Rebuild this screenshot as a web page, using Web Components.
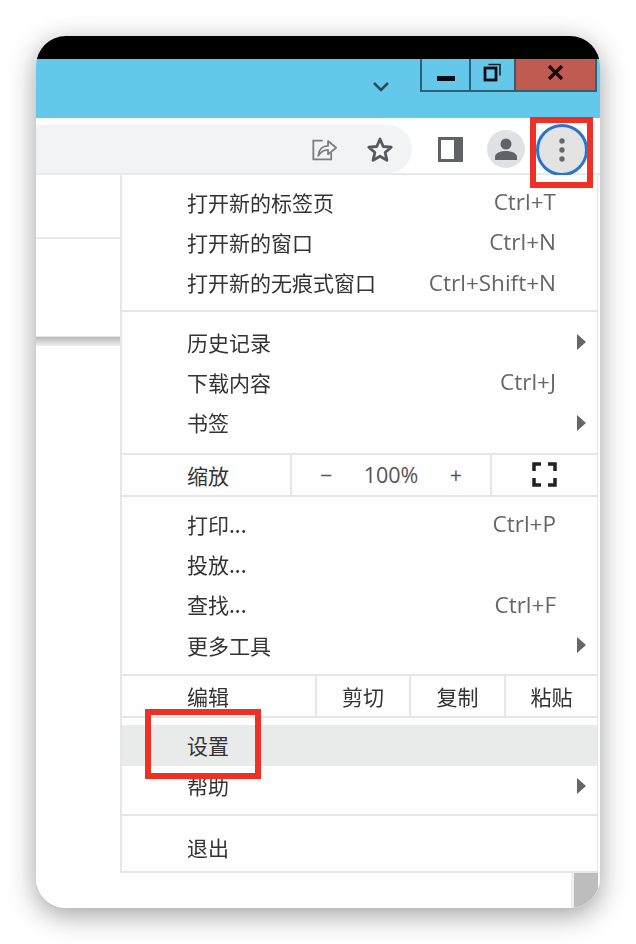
<!DOCTYPE html>
<html lang="zh-CN">

<head>
  <meta charset="UTF-8">
  <title>Chrome menu</title>
  <style>
    html, body {
      margin: 0;
      background: #fff;
    }

    body {
      padding: 36px 36px 36px;
      font-family: "Open Sans", "Noto Sans CJK SC", sans-serif;
    }
  </style>
</head>

<body>
  <template id="browser-window">
    <style>
      :host {
        display: flex;
        flex-direction: column;
        position: relative;
        width: 564px;
        height: 872px;
        border-radius: 30px;
        overflow: hidden;
        background: #fefefe;
        box-shadow: 0 7px 28px rgba(0, 0, 0, .38);
        filter: blur(.4px);
      }

      .top {
        height: 23px;
        background: #000;
        flex: none;
      }
    </style>
    <div class="top"></div>
    <slot></slot>
  </template>

  <template id="title-bar">
    <style>
      :host {
        display: flex;
        justify-content: flex-end;
        align-items: flex-start;
        height: 59px;
        flex: none;
        background: #63c8e9;
        padding-right: 3px;
        box-sizing: border-box;
      }

      .chev {
        margin: 22px 30px 0 0;
      }

      .ctl {
        display: flex;
        height: 33px;
        box-sizing: border-box;
        border: solid #2f6175;
        border-width: 0 2px 2px 2px;
      }

      .ctl div {
        display: flex;
        align-items: center;
        justify-content: center;
        padding-bottom: 4px;
        box-sizing: border-box;
      }

      .ctl .min {
        width: 49px;
        border-right: 2px solid #2f6175;
        padding: 6px 0 0;
      }

      .max {
        width: 45px;
        border-right: 2px solid #2f6175;
      }

      .close {
        width: 79px;
        background: #bf5b50;
      }
    </style>
    <svg class="chev" width="18" height="12" viewBox="0 0 18 12">
      <path d="M2 2l7 7 7-7" fill="none" stroke="#2d4a5a" stroke-width="2.6" />
    </svg>
    <div class="ctl">
      <div class="min"><svg width="18" height="6" viewBox="0 0 18 6"><rect width="18" height="5" y="1" fill="#0a0a12" /></svg></div>
      <div class="max"><svg width="19" height="19" viewBox="0 0 19 19">
          <path d="M5.500 1.500h11.500v11" fill="none" stroke="#16242c" stroke-width="1.600" />
          <rect x="2" y="5" width="11" height="12" fill="none" stroke="#0a0a12" stroke-width="2.800" />
        </svg></div>
      <div class="close"><svg width="17" height="15" viewBox="0 0 17 15">
          <path d="M2 1l13 13M15 1L2 14" stroke="#160c0c" stroke-width="3.400" fill="none" />
        </svg></div>
    </div>
  </template>

  <template id="tool-bar">
    <style>
      :host {
        display: flex;
        align-items: flex-start;
        height: 57px;
        flex: none;
        box-sizing: border-box;
        padding-top: 7px;
        background: #fff;
        border-bottom: 2px solid #e8e9ea;
      }

      .omni {
        width: 376px;
        height: 48px;
        background: #f1f3f4;
        border-radius: 0 24px 24px 0;
        display: flex;
        align-items: center;
        justify-content: flex-end;
        gap: 28px;
        padding-right: 18px;
        box-sizing: border-box;
      }

      .side {
        margin: 12px 0 0 26px;
      }

      .avatar {
        width: 38px;
        height: 38px;
        border-radius: 50%;
        background: #dfe1e5;
        margin: 5px 0 0 24px;
        display: flex;
        align-items: center;
        justify-content: center;
      }

      .dots {
        width: 46px;
        height: 46px;
        border-radius: 50%;
        background: #e3e3e3;
        border: 3px solid #2b74c9;
        margin: -1px 0 0 11px;
        flex: none;
        display: flex;
        align-items: center;
        justify-content: center;
      }
    </style>
    <div class="omni">
      <svg width="27" height="25" viewBox="0 0 30 28" fill="none">
        <path d="M13 4H2.500v21h20v-7" stroke="#7a7e82" stroke-width="2" />
        <path d="M8 21c.500-7 5-11 11-11V4.500L28 12l-9 7.500v-5c-5 0-8 2-11 6.500z" stroke="#7a7e82" stroke-width="2" stroke-linejoin="round" />
      </svg>
      <svg width="28" height="27" viewBox="0 0 28 27" fill="none">
        <path d="M14 3l3.200 7.500 8 .7-6.100 5.300 1.900 7.900L14 20.200l-7 4.200 1.900-7.900-6.100-5.300 8-.7z" stroke="#55595d" stroke-width="2.800" stroke-linejoin="round" />
      </svg>
    </div>
    <svg class="side" width="25" height="25" viewBox="0 0 25 25">
      <rect width="25" height="25" fill="#5f6368" />
      <rect x="3" y="3" width="13" height="19" fill="#fff" />
    </svg>
    <div class="avatar">
      <svg width="24" height="24" viewBox="0 0 24 24" fill="#5f6368">
        <circle cx="12" cy="7" r="5.500" />
        <path d="M1 23v-3c0-4 6-6 11-6s11 2 11 6v3z" />
      </svg>
    </div>
    <div class="dots">
      <svg width="6" height="26" viewBox="0 0 6 26" fill="#66696c">
        <circle cx="3" cy="4" r="2.700" />
        <circle cx="3" cy="13" r="2.700" />
        <circle cx="3" cy="22" r="2.700" />
      </svg>
    </div>
  </template>

  <template id="page-area">
    <style>
      :host {
        display: block;
        flex: 1;
        position: relative;
        background: #fefefe;
      }

      .left {
        width: 84px;
      }

      .a {
        height: 62px;
        border-bottom: 2px solid #e9e9e9;
      }

      .b {
        height: 97px;
        border-bottom: 1px solid #e4e4e4;
      }

      .c {
        height: 9px;
        background: linear-gradient(#b9b9b9, #efefef);
      }

      .thumb {
        position: absolute;
        right: 2px;
        bottom: 0;
        width: 24px;
        height: 36px;
        background: #bdbdbd;
        border-left: 3px solid #efefef;
      }
    </style>
    <div class="left">
      <div class="a"></div>
      <div class="b"></div>
      <div class="c"></div>
    </div>
    <div class="thumb"></div>
    <slot></slot>
  </template>

  <template id="chrome-menu">
    <style>
      :host {
        display: block;
        position: absolute;
        left: 84px;
        top: 0;
        width: 478px;
        height: 698px;
        box-sizing: border-box;
        background: #fefefe;
        border: 2px solid #e6e6e6;
        border-width: 0 1px 2px 2px;
        color: #333;
        font-family: "Noto Sans CJK SC", "Open Sans", sans-serif;
        font-size: 21px;
      }
    </style>
    <slot></slot>
  </template>

  <template id="menu-section">
    <style>
      :host {
        display: block;
        border-bottom: 2px solid #e6e6e6;
        box-sizing: border-box;
      }

      :host([last]) {
        border-bottom: 0;
      }
    </style>
    <slot></slot>
  </template>

  <template id="menu-item">
    <style>
      :host {
        display: flex;
        align-items: center;
        height: 40.330px;
        padding: 0 41px 0 65px;
        position: relative;
        line-height: 1;
      }

      :host([active]) {
        background: #e9eaea;
      }

      .key {
        margin-left: auto;
        font-family: "Open Sans", sans-serif;
        font-size: 22.500px;
        color: #666;
      }

      svg {
        position: absolute;
        right: 11px;
        top: 12px;
      }
    </style>
    <slot></slot>
    <span class="key"></span>
  </template>

  <template id="zoom-row">
    <style>
      :host {
        display: grid;
        grid-template-columns: 170px 200px 1fr;
        height: 40px;
        line-height: 1;
      }

      div {
        display: flex;
        align-items: center;
      }

      .label {
        padding: 1px 0 0 65px;
        border-right: 2px solid #e6e6e6;
      }

      .ctl {
        border-right: 2px solid #e6e6e6;
        justify-content: space-between;
        padding: 0 28px;
        font-family: "Open Sans", sans-serif;
        font-size: 21.500px;
        color: #555;
      }

      .full {
        justify-content: center;
      }
    </style>
    <div class="label"><slot></slot></div>
    <div class="ctl"><span>−</span><span>100%</span><span>+</span></div>
    <div class="full">
      <svg width="25" height="25" viewBox="0 0 25 25" fill="none" stroke="#222" stroke-width="3.500">
        <path d="M2 9V2h7M16 2h7v7M2 16v7h7M16 23h7v-7" />
      </svg>
    </div>
  </template>

  <template id="edit-row">
    <style>
      :host {
        display: grid;
        grid-template-columns: 195px 94px 95px 1fr;
        height: 40px;
        line-height: 1;
      }

      div {
        display: flex;
        align-items: center;
        justify-content: center;
        border-right: 2px solid #e6e6e6;
      }

      .label {
        justify-content: flex-start;
        padding: 1px 0 0 65px;
      }

      div:last-child {
        border-right: 0;
      }
    </style>
    <div class="label"><slot></slot></div>
    <div>剪切</div>
    <div>复制</div>
    <div>粘贴</div>
  </template>

  <template id="callout-box">
    <style>
      :host {
        display: block;
        position: absolute;
        box-sizing: border-box;
        border: 6px solid #ee3124;
      }
    </style>
  </template>

  <browser-window>
    <title-bar></title-bar>
    <tool-bar></tool-bar>
    <page-area>
      <chrome-menu>
        <menu-section style="padding: 7px 0 7px">
          <menu-item shortcut="Ctrl+T">打开新的标签页</menu-item>
          <menu-item shortcut="Ctrl+N">打开新的窗口</menu-item>
          <menu-item shortcut="Ctrl+Shift+N">打开新的无痕式窗口</menu-item>
        </menu-section>
        <menu-section style="padding: 10px 0 10px">
          <menu-item arrow>历史记录</menu-item>
          <menu-item shortcut="Ctrl+J">下载内容</menu-item>
          <menu-item arrow>书签</menu-item>
        </menu-section>
        <menu-section>
          <zoom-row>缩放</zoom-row>
        </menu-section>
        <menu-section style="padding: 7px 0 9px">
          <menu-item shortcut="Ctrl+P">打印...</menu-item>
          <menu-item>投放...</menu-item>
          <menu-item shortcut="Ctrl+F">查找...</menu-item>
          <menu-item arrow>更多工具</menu-item>
        </menu-section>
        <menu-section>
          <edit-row>编辑</edit-row>
        </menu-section>
        <menu-section style="padding: 7px 0 8px">
          <menu-item active>设置</menu-item>
          <menu-item arrow>帮助</menu-item>
        </menu-section>
        <menu-section last style="padding-top: 11px">
          <menu-item>退出</menu-item>
        </menu-section>
      </chrome-menu>
    </page-area>
    <callout-box style="left: 494px; top: 81px; width: 63px; height: 71px"></callout-box>
    <callout-box style="left: 109px; top: 673px; width: 116px; height: 70px"></callout-box>
  </browser-window>

  <script>
    // 每个组件都从同名 template 克隆
    class Base extends HTMLElement {
      constructor() {
        super();
        const shadowRoot = this.attachShadow({ mode: 'open' });
        const template = document.getElementById(this.localName);
        shadowRoot.appendChild(template.content.cloneNode(true));
      }
    }

    class MenuItem extends Base {
      connectedCallback() {
        const key = this.shadowRoot.querySelector('.key');
        key.textContent = this.getAttribute('shortcut') || '';
        if (this.hasAttribute('arrow') && !this.shadowRoot.querySelector('svg')) {
          this.shadowRoot.innerHTML += '<svg width="9" height="16" viewBox="0 0 9 16"><path d="M0 0l9 8-9 8z" fill="#666"/></svg>';
        }
      }
    }

    ['browser-window', 'title-bar', 'tool-bar', 'page-area', 'chrome-menu', 'menu-section', 'zoom-row', 'edit-row', 'callout-box']
      .forEach((name) => customElements.define(name, class extends Base { }));
    customElements.define('menu-item', MenuItem);
  </script>
</body>

</html>
